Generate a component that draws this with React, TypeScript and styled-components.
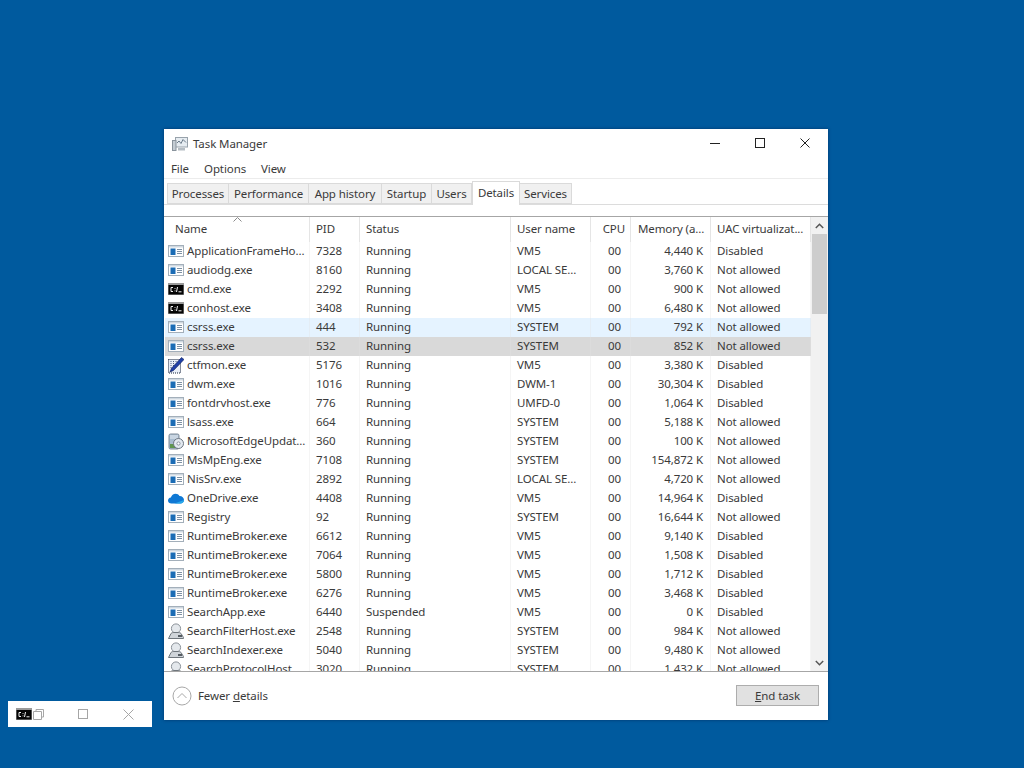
import React from 'react';
import styled, { createGlobalStyle } from 'styled-components';

const Global = createGlobalStyle`
  html, body { margin: 0; padding: 0; background: #005a9e; }
  * { box-sizing: border-box; }
`;

const Desktop = styled.div`
  position: relative;
  width: 1024px;
  height: 768px;
  overflow: hidden;
  background: #005a9e;
  font-family: "Noto Sans", "Open Sans", sans-serif;
  font-size: 11.5px;
  letter-spacing: -0.1px;
  color: #3a3a3a;
`;

const Window = styled.div`
  position: absolute;
  left: 164px;
  top: 129px;
  width: 664px;
  height: 591px;
  background: #fff;
  display: flex;
  flex-direction: column;
  box-shadow: 0 0 3px rgba(0, 30, 70, 0.6);
`;

const TitleBar = styled.div`
  height: 28px;
  display: flex;
  align-items: center;
  padding: 2px 0 0 8px;
  gap: 5px;
`;

const TitleText = styled.span`
  flex: 1;
  line-height: 16px;
`;

const Controls = styled.div`
  display: flex;
  align-items: center;
  padding: 0 18px 2px 0;
  gap: 35px;
`;

const Control = styled.svg`
  width: 10px;
  height: 10px;
  flex: none;
`;

const MenuBar = styled.div`
  height: 22px;
  display: flex;
  align-items: center;
  padding: 2px 0 0 7px;
  gap: 15px;
  border-bottom: 1px solid #ececec;
`;

const TabStrip = styled.div`
  height: 26px;
  display: flex;
  align-items: flex-end;
  padding-left: 3px;
  border-bottom: 1px solid #dcdcdc;
`;

const Tab = styled.div<{ $w: number; $active?: boolean }>`
  width: ${p => p.$w}px;
  height: ${p => (p.$active ? 24 : 21)}px;
  margin-bottom: ${p => (p.$active ? -1 : 0)}px;
  padding-bottom: ${p => (p.$active ? 3 : 0)}px;
  display: flex;
  align-items: center;
  justify-content: center;
  background: ${p => (p.$active ? '#fff' : '#f0f0f0')};
  border: 1px solid #dadada;
  border-bottom: ${p => (p.$active ? 'none' : '1px solid #dadada')};
  border-left-width: ${p => (p.$active ? 1 : 0)}px;
  &:first-child { border-left-width: 1px; }
`;

const ListArea = styled.div`
  margin-top: 11px;
  flex: 1;
  min-height: 0;
  display: flex;
  border-top: 1px solid #a6a6a6;
  border-bottom: 1px solid #a6a6a6;
`;

const Table = styled.div`
  position: relative;
  flex: 1;
  min-width: 0;
  overflow: hidden;
  padding-left: 1px;
`;

const HeaderRow = styled.div`
  height: 24.5px;
  display: grid;
  grid-template-columns: 145px 50px 151px 80px 40px 80px 100px;
`;

const HeaderCell = styled.div<{ $right?: boolean; $pad: number }>`
  display: flex;
  align-items: center;
  padding: 0 ${p => (p.$right ? 5 : 0)}px 0 ${p => p.$pad}px;
  justify-content: ${p => (p.$right ? 'flex-end' : 'flex-start')};
  border-right: 1px solid #e5e5e5;
  white-space: nowrap;
  overflow: hidden;
  line-height: 16px;
`;

const SortArrow = styled.svg`
  position: absolute;
  left: 69px;
  top: 0;
`;

const Row = styled.div<{ $state?: 'hover' | 'selected' }>`
  height: 19px;
  display: grid;
  grid-template-columns: 145px 50px 151px 80px 40px 80px 100px;
  background: ${p => (p.$state === 'hover' ? '#e5f3ff' : p.$state === 'selected' ? '#d9d9d9' : 'transparent')};
`;

const Cell = styled.div<{ $right?: boolean; $pad?: number; $end?: number }>`
  display: flex;
  align-items: center;
  justify-content: ${p => (p.$right ? 'flex-end' : 'flex-start')};
  padding: 0 ${p => p.$end ?? 0}px 0 ${p => p.$pad ?? 0}px;
  border-right: 1px solid rgba(225, 225, 225, 0.35);
  white-space: nowrap;
  overflow: hidden;
  line-height: 16px;
`;

const NameCell = styled(Cell)`
  padding-left: 3px;
  gap: 3px;
`;

const IconBox = styled.svg`
  flex: none;
`;

const ScrollBar = styled.div`
  width: 17px;
  flex: none;
  background: #f1f1f1;
  display: flex;
  flex-direction: column;
`;

const ScrollArrow = styled.div`
  height: 17px;
  flex: none;
  display: flex;
  align-items: center;
  justify-content: center;
`;

const ScrollThumb = styled.div`
  height: 80px;
  flex: none;
  background: #cdcdcd;
  margin: 0 1px;
`;

const ScrollTrack = styled.div`
  flex: 1;
`;

const Footer = styled.div`
  height: 48px;
  flex: none;
  display: flex;
  align-items: center;
  padding: 0 9px 1px 8px;
`;

const FewerButton = styled.div`
  flex: 1;
  display: flex;
  align-items: center;
  gap: 6px;
`;

const EndTask = styled.div`
  width: 83px;
  height: 21px;
  background: #e1e1e1;
  border: 1px solid #adadad;
  display: flex;
  align-items: center;
  justify-content: center;
`;

const Key = styled.span`
  text-decoration: underline;
`;

const MiniWindow = styled.div`
  position: absolute;
  left: 8px;
  top: 701px;
  width: 144px;
  height: 26px;
  background: #fff;
  display: flex;
  align-items: center;
  padding-left: 8px;
`;

const MiniGroup = styled.div<{ $w: number }>`
  width: ${p => p.$w}px;
  display: flex;
  align-items: center;
`;

const RestoreGlyph = styled.svg`
  margin-left: 1px;
`;

const AppIcon = () => (
  <IconBox width="16" height="14" viewBox="0 0 16 14">
    <rect x="0.5" y="1.5" width="15" height="11" fill="#fff" stroke="#a3afba" />
    <rect x="1" y="2" width="14" height="1.5" fill="#cfd8e0" />
    <rect x="2.5" y="4.5" width="5" height="6.5" fill="#1b6cb5" />
    <path d="M9 5.5h5M9 7.5h5M9 9.5h5" stroke="#7d90a3" />
  </IconBox>
);

const ConsoleIcon = () => (
  <IconBox width="16" height="14" viewBox="0 0 16 14">
    <rect x="0" y="1" width="16" height="12" fill="#9a9a9a" />
    <rect x="0.5" y="3" width="15" height="9.5" fill="#050505" />
    <path d="M5 5.5H3v4h2M7 6v.8M7 8.5v.8M9.5 5l-1 5M10.5 9.8h3" stroke="#f2f2f2" strokeWidth="1" fill="none" />
  </IconBox>
);

const PenIcon = () => (
  <IconBox width="16" height="17" viewBox="0 0 16 17">
    <rect x="0.5" y="2.5" width="12" height="13.5" fill="#e8eef7" stroke="#17243c" strokeDasharray="1 1" />
    <path d="M2.5 4.5h1M5 4.5h1M7.5 4.5h1M2.5 6.5h1M5 6.5h1M2.5 8.5h1M5 8.5h1M2.5 10.5h1" stroke="#4a5f86" />
    <path d="M13.5 0.5L16 2.5 5.5 13.5 2 15l1.5-3.7z" fill="#1f3fa8" stroke="#0a1a50" strokeWidth="0.6" />
  </IconBox>
);

const EdgeUpdateIcon = () => (
  <IconBox width="16" height="17" viewBox="0 0 16 17">
    <rect x="1" y="1" width="10" height="15" rx="1.5" fill="#a9bccf" stroke="#7f8b98" />
    <path d="M2 3h8M2 5h8" stroke="#e8eef4" />
    <rect x="2" y="11" width="5" height="4" fill="#5f9550" />
    <circle cx="10.5" cy="10.5" r="5" fill="#e3e9f0" stroke="#6c7580" />
    <circle cx="10.5" cy="10.5" r="1.6" fill="#fff" stroke="#8a94a0" />
  </IconBox>
);

const CloudIcon = () => (
  <IconBox width="16" height="14" viewBox="0 0 16 14">
    <path d="M3.4 12.5C1.5 12.5 0 11.2 0 9.5c0-1.6 1.2-2.8 2.9-3C3.5 4.3 5.4 2.8 7.6 2.8c1.7 0 3.1.8 3.9 2.2 2.5-.1 4.5 1.8 4.5 4 0 2-1.6 3.5-3.6 3.5z" fill="#0f78d4" />
    <path d="M6.5 12.5 L16 9c0 2-1.6 3.5-3.6 3.5z" fill="#28a8ea" />
  </IconBox>
);

const SearchIcon = () => (
  <IconBox width="16" height="17" viewBox="0 0 16 17">
    <circle cx="8" cy="5.5" r="4.6" fill="#e4e8ec" stroke="#8a9198" />
    <path d="M0.5 15.5l2.5-5c1-1 2-1 3-1h4c1 0 2 0 3 1l2.5 4v1z" fill="#cfd4d9" stroke="#6f767c" />
    <rect x="10" y="12" width="4" height="2" fill="#555c62" />
  </IconBox>
);

const ICONS = {
  app: AppIcon,
  console: ConsoleIcon,
  pen: PenIcon,
  edge: EdgeUpdateIcon,
  cloud: CloudIcon,
  search: SearchIcon,
};

type IconKey = keyof typeof ICONS;
type Proc = [IconKey, string, string, string, string, string, string, 'hover' | 'selected' | undefined];

const PROCS: Proc[] = [
  ['app', 'ApplicationFrameHo...', '7328', 'Running', 'VM5', '4,440 K', 'Disabled', undefined],
  ['app', 'audiodg.exe', '8160', 'Running', 'LOCAL SE...', '3,760 K', 'Not allowed', undefined],
  ['console', 'cmd.exe', '2292', 'Running', 'VM5', '900 K', 'Not allowed', undefined],
  ['console', 'conhost.exe', '3408', 'Running', 'VM5', '6,480 K', 'Not allowed', undefined],
  ['app', 'csrss.exe', '444', 'Running', 'SYSTEM', '792 K', 'Not allowed', 'hover'],
  ['app', 'csrss.exe', '532', 'Running', 'SYSTEM', '852 K', 'Not allowed', 'selected'],
  ['pen', 'ctfmon.exe', '5176', 'Running', 'VM5', '3,380 K', 'Disabled', undefined],
  ['app', 'dwm.exe', '1016', 'Running', 'DWM-1', '30,304 K', 'Disabled', undefined],
  ['app', 'fontdrvhost.exe', '776', 'Running', 'UMFD-0', '1,064 K', 'Disabled', undefined],
  ['app', 'lsass.exe', '664', 'Running', 'SYSTEM', '5,188 K', 'Not allowed', undefined],
  ['edge', 'MicrosoftEdgeUpdat...', '360', 'Running', 'SYSTEM', '100 K', 'Not allowed', undefined],
  ['app', 'MsMpEng.exe', '7108', 'Running', 'SYSTEM', '154,872 K', 'Not allowed', undefined],
  ['app', 'NisSrv.exe', '2892', 'Running', 'LOCAL SE...', '4,720 K', 'Not allowed', undefined],
  ['cloud', 'OneDrive.exe', '4408', 'Running', 'VM5', '14,964 K', 'Disabled', undefined],
  ['app', 'Registry', '92', 'Running', 'SYSTEM', '16,644 K', 'Not allowed', undefined],
  ['app', 'RuntimeBroker.exe', '6612', 'Running', 'VM5', '9,140 K', 'Disabled', undefined],
  ['app', 'RuntimeBroker.exe', '7064', 'Running', 'VM5', '1,508 K', 'Disabled', undefined],
  ['app', 'RuntimeBroker.exe', '5800', 'Running', 'VM5', '1,712 K', 'Disabled', undefined],
  ['app', 'RuntimeBroker.exe', '6276', 'Running', 'VM5', '3,468 K', 'Disabled', undefined],
  ['app', 'SearchApp.exe', '6440', 'Suspended', 'VM5', '0 K', 'Disabled', undefined],
  ['search', 'SearchFilterHost.exe', '2548', 'Running', 'SYSTEM', '984 K', 'Not allowed', undefined],
  ['search', 'SearchIndexer.exe', '5040', 'Running', 'SYSTEM', '9,480 K', 'Not allowed', undefined],
  ['search', 'SearchProtocolHost', '3020', 'Running', 'SYSTEM', '1,432 K', 'Not allowed', undefined],
];

const TABS: [string, number][] = [
  ['Processes', 62],
  ['Performance', 80],
  ['App history', 73],
  ['Startup', 50],
  ['Users', 40],
  ['Details', 48],
  ['Services', 52],
];

const HEADERS: [string, number, boolean][] = [
  ['Name', 10, false],
  ['PID', 6, false],
  ['Status', 6, false],
  ['User name', 6, false],
  ['CPU', 0, true],
  ['Memory (a...', 7, false],
  ['UAC virtualizat...', 6, false],
];

const TaskIcon = () => (
  <svg width="16" height="16" viewBox="0 0 16 16">
    <rect x="3.5" y="1.5" width="12" height="9.5" fill="#e6ecf1" stroke="#98a2ab" />
    <path d="M5 7l2-2 2 2.5 2-4 3 3" stroke="#6b7b8a" fill="none" />
    <rect x="0.5" y="4.5" width="3.5" height="10" fill="#c4ccd3" stroke="#89939c" />
    <rect x="6" y="12" width="7" height="2.5" fill="#b5bdc4" />
  </svg>
);

const App = () => (
  <Desktop>
    <Global />
    <Window>
      <TitleBar>
        <TaskIcon />
        <TitleText>Task Manager</TitleText>
        <Controls>
          <Control viewBox="0 0 10 10"><path d="M0 5.5h10" stroke="#222" /></Control>
          <Control viewBox="0 0 10 10"><rect x="0.5" y="0.5" width="9" height="9" fill="none" stroke="#222" /></Control>
          <Control viewBox="0 0 10 10"><path d="M0.5 0.5l9 9M9.5 0.5l-9 9" stroke="#222" /></Control>
        </Controls>
      </TitleBar>
      <MenuBar>
        <span>File</span>
        <span>Options</span>
        <span>View</span>
      </MenuBar>
      <TabStrip>
        {TABS.map(([label, w]) => (
          <Tab key={label} $w={w} $active={label === 'Details'}>{label}</Tab>
        ))}
      </TabStrip>
      <ListArea>
        <Table>
          <SortArrow width="9" height="5" viewBox="0 0 9 5">
            <path d="M0.5 4.5l4-4 4 4" stroke="#8a8a8a" fill="none" />
          </SortArrow>
          <HeaderRow>
            {HEADERS.map(([label, pad, right]) => (
              <HeaderCell key={label} $pad={pad} $right={right}>{label}</HeaderCell>
            ))}
          </HeaderRow>
          {PROCS.map(([icon, name, pid, status, user, mem, uac, state]) => {
            const Icon = ICONS[icon];
            return (
              <Row key={pid} $state={state}>
                <NameCell><Icon />{name}</NameCell>
                <Cell $pad={6}>{pid}</Cell>
                <Cell $pad={6}>{status}</Cell>
                <Cell $pad={6}>{user}</Cell>
                <Cell $right $end={9}>00</Cell>
                <Cell $right $end={7}>{mem}</Cell>
                <Cell $pad={6}>{uac}</Cell>
              </Row>
            );
          })}
        </Table>
        <ScrollBar>
          <ScrollArrow>
            <svg width="9" height="6" viewBox="0 0 9 6"><path d="M0.8 5l3.7-3.7L8.2 5" stroke="#555" strokeWidth="1.5" fill="none" /></svg>
          </ScrollArrow>
          <ScrollThumb />
          <ScrollTrack />
          <ScrollArrow>
            <svg width="9" height="6" viewBox="0 0 9 6"><path d="M0.8 1l3.7 3.7L8.2 1" stroke="#555" strokeWidth="1.5" fill="none" /></svg>
          </ScrollArrow>
        </ScrollBar>
      </ListArea>
      <Footer>
        <FewerButton>
          <svg width="20" height="20" viewBox="0 0 20 20">
            <circle cx="10" cy="10" r="9" fill="#fff" stroke="#a8a8a8" />
            <path d="M5.5 12l4.5-4.5 4.5 4.5" stroke="#a8a8a8" fill="none" />
          </svg>
          <span>Fewer <Key>d</Key>etails</span>
        </FewerButton>
        <EndTask><span><Key>E</Key>nd task</span></EndTask>
      </Footer>
    </Window>
    <MiniWindow>
      <ConsoleIcon />
      <MiniGroup $w={46}>
        <RestoreGlyph width="11" height="11" viewBox="0 0 11 11">
          <path d="M3 2.5V0.5h7.5V8H8.5M0.5 2.5h8v8h-8z" fill="none" stroke="#a6a6a6" />
        </RestoreGlyph>
      </MiniGroup>
      <MiniGroup $w={45}>
        <svg width="10" height="10" viewBox="0 0 10 10"><rect x="0.5" y="0.5" width="9" height="9" fill="none" stroke="#a6a6a6" /></svg>
      </MiniGroup>
      <MiniGroup $w={12}>
        <svg width="11" height="11" viewBox="0 0 11 11"><path d="M0.5 0.5l10 10M10.5 0.5l-10 10" stroke="#a6a6a6" /></svg>
      </MiniGroup>
    </MiniWindow>
  </Desktop>
);

export default App;
